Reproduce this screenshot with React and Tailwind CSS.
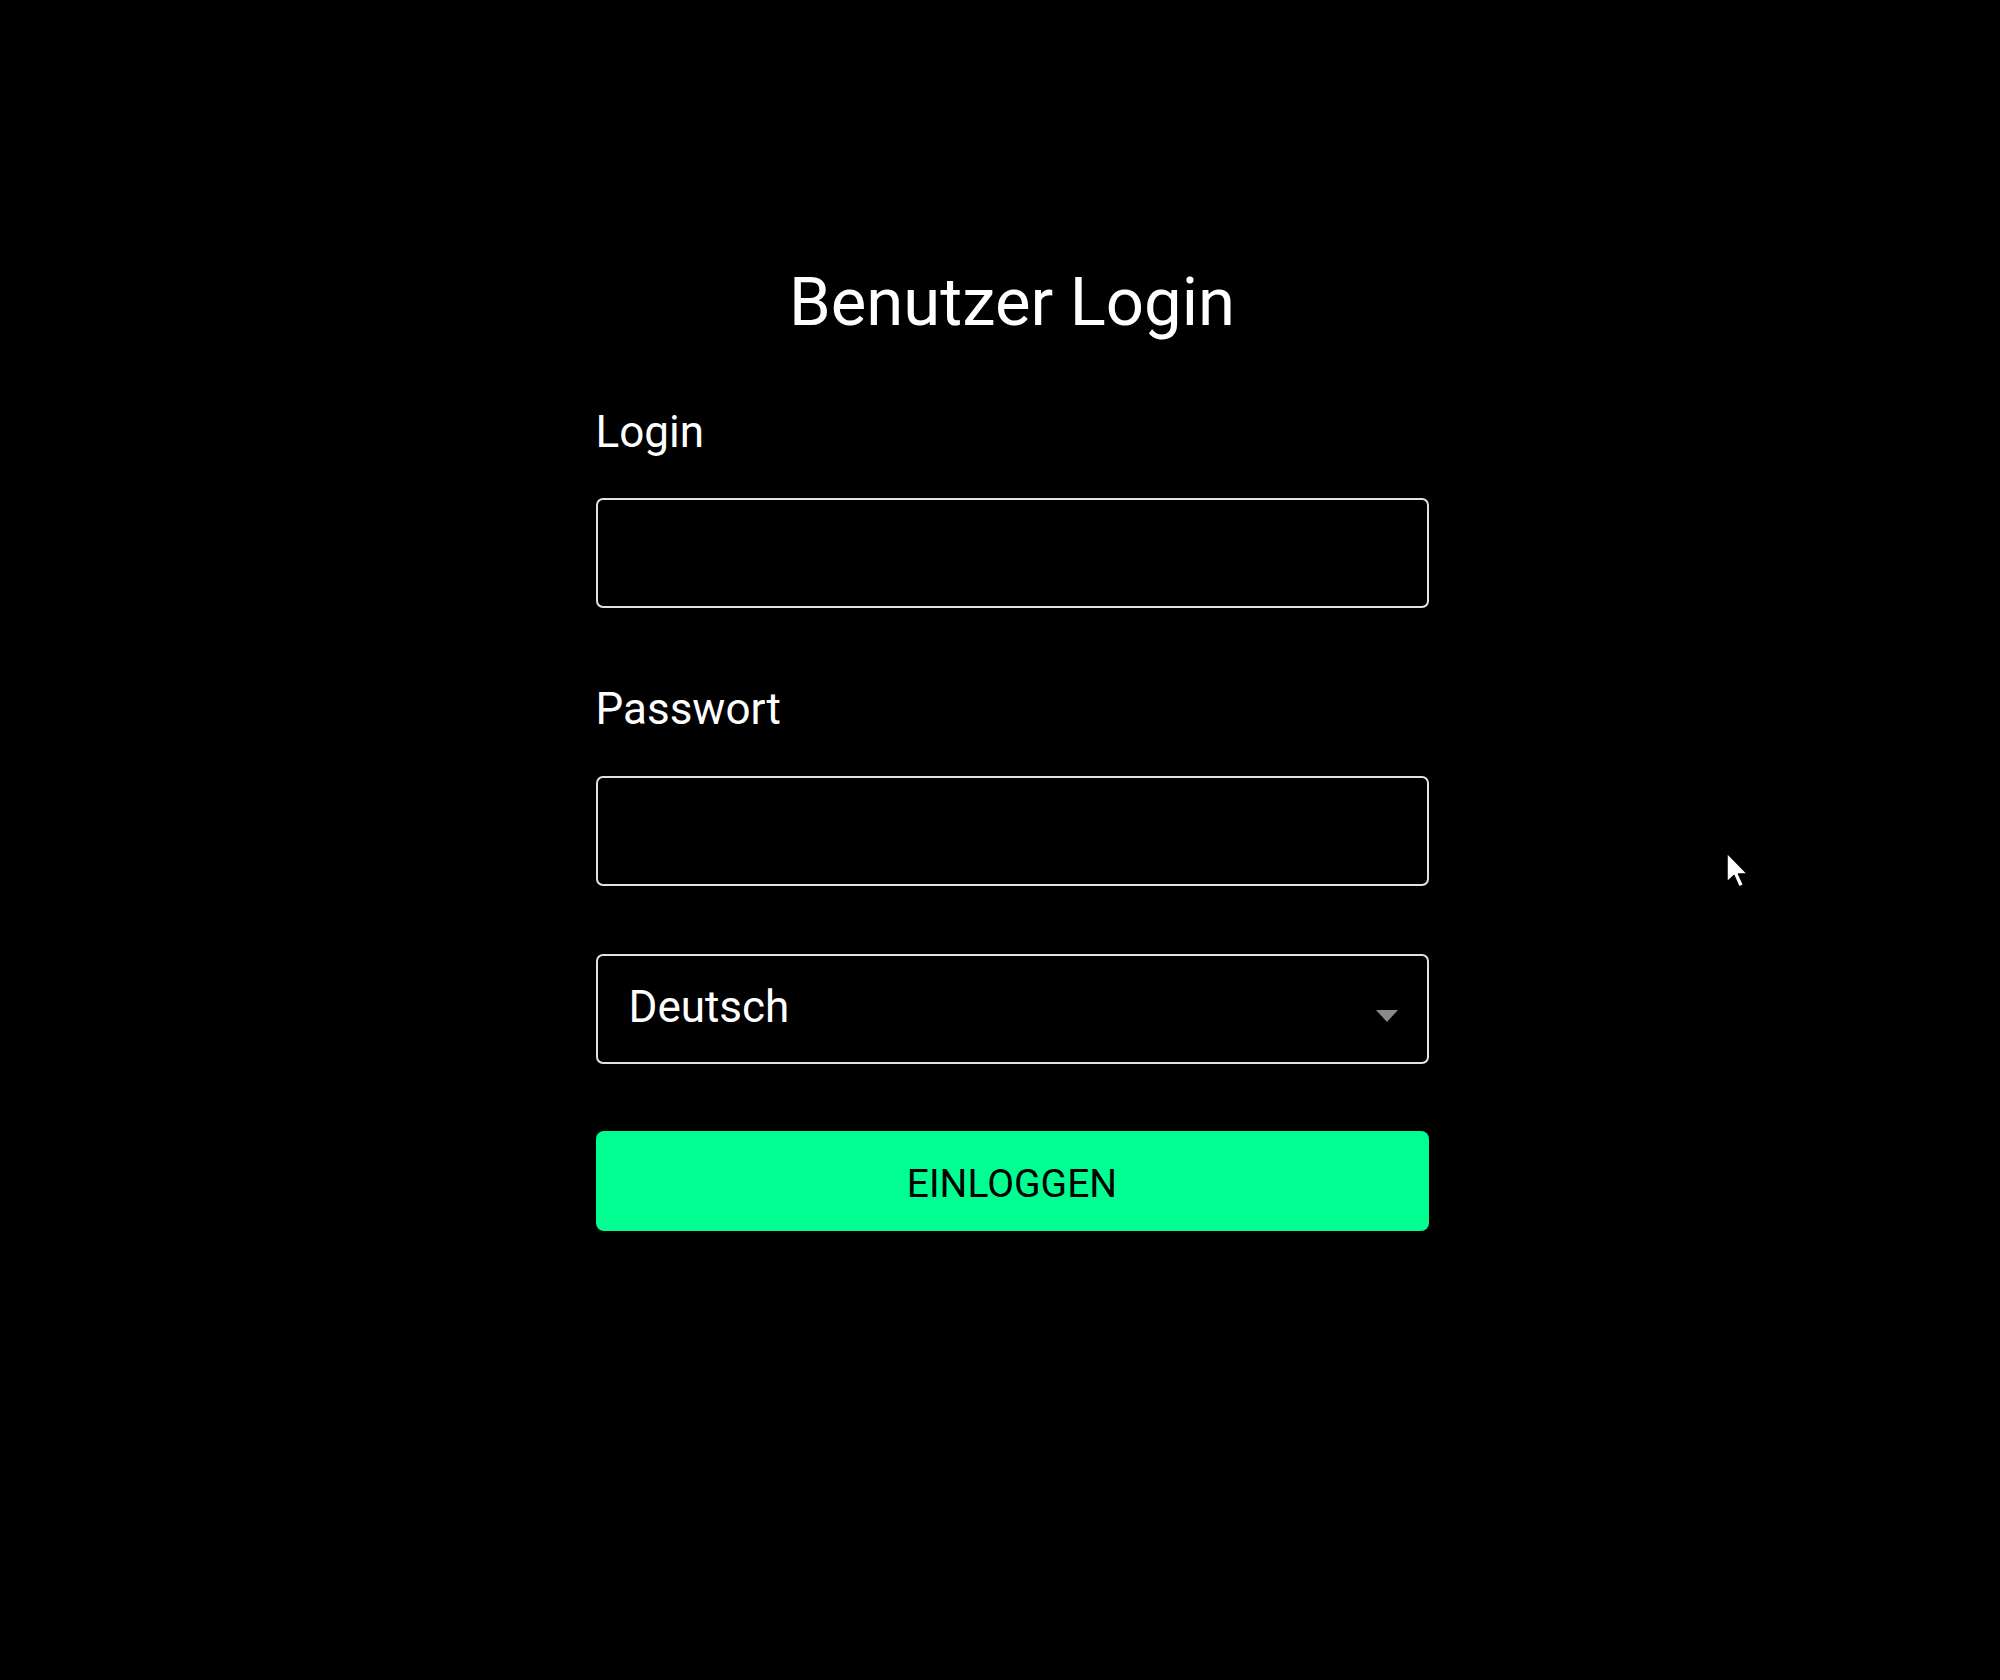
import React from 'react';

export default function App() {
  return (
    <div
      className="relative min-h-[1680px] bg-black flex justify-center pl-[24px]"
      style={{ fontFamily: 'Roboto, "Noto Sans", sans-serif' }}
    >
      <div className="w-[833px] pt-[264px] flex flex-col">
        <h1 className="text-center text-[67px] leading-[76px] font-normal text-white">
          Benutzer Login
        </h1>

        <label className="mt-[66px] text-[44px] leading-[52px] text-white">Login</label>
        <input
          type="text"
          className="mt-[40px] h-[110px] w-full rounded-[7px] border-2 border-[#e2e2e2] bg-black px-[31px] text-[42px] text-white outline-none"
        />

        <label className="mt-[75px] text-[44px] leading-[52px] text-white">Passwort</label>
        <input
          type="password"
          className="mt-[41px] h-[110px] w-full rounded-[7px] border-2 border-[#e2e2e2] bg-black px-[31px] text-[42px] text-white outline-none"
        />

        {/* language select */}
        <div className="mt-[68px] h-[110px] w-full rounded-[7px] border-2 border-[#e2e2e2] bg-black flex items-center justify-between pl-[31px] pr-[29px]">
          <span className="text-[44px] leading-[52px] text-white pb-[4px]">Deutsch</span>
          <svg width="22" height="12" viewBox="0 0 22 12" className="mt-[14px]">
            <path d="M0 0 L22 0 L11 12 Z" fill="#8a8a8a" />
          </svg>
        </div>

        <button className="mt-[67px] h-[100px] w-full rounded-[8px] bg-[#00ff91] pt-[5px] text-[39px] leading-[44px] text-black uppercase">
          Einloggen
        </button>
      </div>

      {/* mouse pointer */}
      <svg
        className="absolute left-[1726px] top-[852px]"
        width="24"
        height="38"
        viewBox="0 0 24 38"
      >
        <path
          d="M1 1 L1 30 L8 23.5 L13 35 L17.5 33 L12.5 22 L21.5 22 Z"
          fill="#ffffff"
          stroke="#000000"
          strokeWidth="1.5"
          strokeLinejoin="round"
        />
      </svg>
    </div>
  );
}
